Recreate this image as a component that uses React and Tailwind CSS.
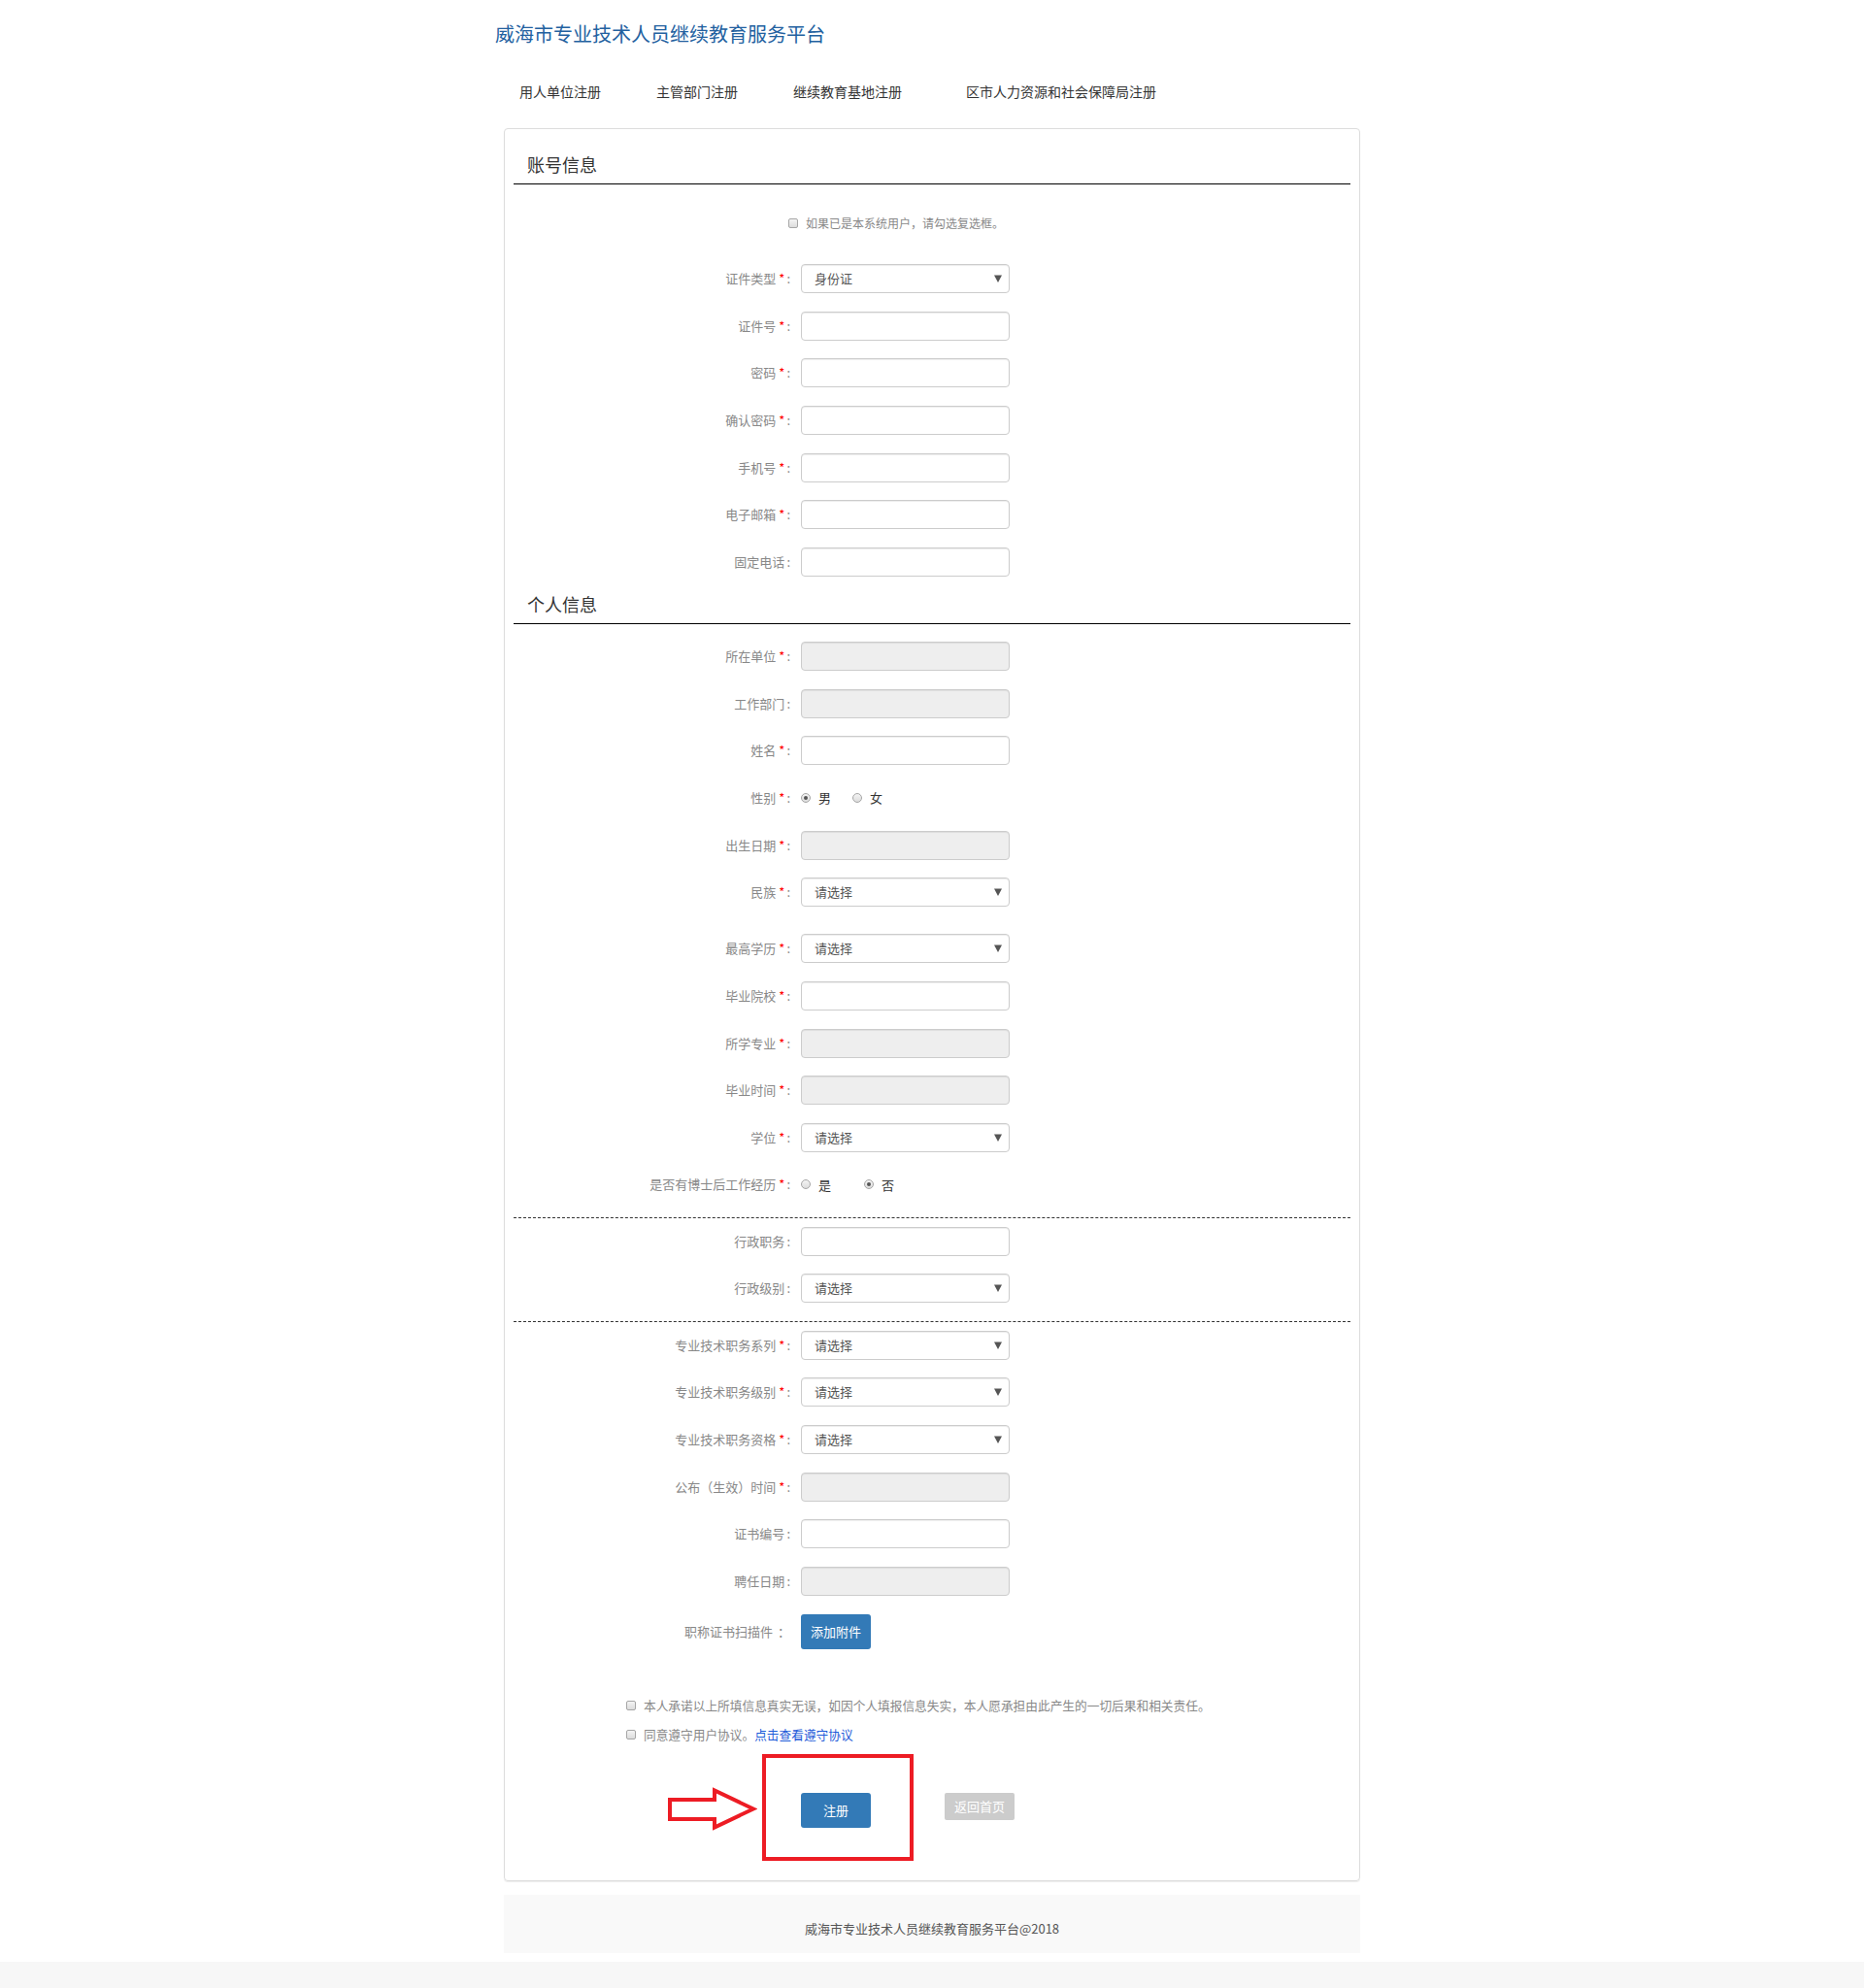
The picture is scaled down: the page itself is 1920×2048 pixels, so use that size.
import React from 'react';

const NAV = [
  { label: '用人单位注册', w: 'w-[141px]' },
  { label: '主管部门注册', w: 'w-[141px]' },
  { label: '继续教育基地注册', w: 'w-[178px]' },
  { label: '区市人力资源和社会保障局注册', w: '' },
];

function Check() {
  return (
    <span className="inline-block w-[10px] h-[10px] rounded-[2px] border border-[#a6a6a6] bg-gradient-to-b from-[#f4f4f4] to-[#dcdcdc] shrink-0" />
  );
}

function Radio({ checked }) {
  return (
    <span className="inline-flex w-[10px] h-[10px] rounded-full border border-[#a6a6a6] bg-gradient-to-b from-[#f4f4f4] to-[#dcdcdc] items-center justify-center shrink-0">
      {checked && <span className="w-[4px] h-[4px] rounded-full bg-[#555]" />}
    </span>
  );
}

function Row({ label, req, colon = ':', className = '', children }) {
  return (
    <div className={`flex items-center ${className}`}>
      <div className="w-[285px] text-right text-[13px] leading-[30px] text-[#888] whitespace-nowrap">
        {label}
        {req && <span className="text-[#f00] ml-[3px]">*</span>}
        <span className="ml-[2px]">{colon}</span>
      </div>
      <div className="ml-[11px] w-[215px]">{children}</div>
    </div>
  );
}

function TextInput({ disabled }) {
  return (
    <input
      type="text"
      disabled={disabled}
      className={`block w-full h-[30px] rounded-[4px] border border-[#ccc] shadow-[inset_0_1px_1px_rgba(0,0,0,0.075)] outline-none ${disabled ? 'bg-[#eee]' : 'bg-white'}`}
    />
  );
}

function Select({ value = '请选择' }) {
  return (
    <div className="flex items-center justify-between h-[30px] rounded-[4px] border border-[#ccc] bg-white shadow-[inset_0_1px_1px_rgba(0,0,0,0.075)] pl-[13px] pr-[7px]">
      <span className="text-[13px] leading-[30px] text-[#555]">{value}</span>
      <svg width="8" height="8" viewBox="0 0 8 8">
        <polygon points="0,0.5 8,0.5 4,8" fill="#555" />
      </svg>
    </div>
  );
}

function SectionHead({ title, className = '' }) {
  return (
    <div className={`pb-[8px] pl-[14px] border-b border-black text-[18px] leading-[24px] text-[#333] ${className}`}>
      {title}
    </div>
  );
}

function Dashed({ className = '' }) {
  return <div className={`border-t border-dashed border-[#333] ${className}`} />;
}

export default function App() {
  return (
    <div className="min-h-screen bg-white font-['Noto_Sans_CJK_SC',sans-serif]">
      <div className="w-[900px] mx-auto">
        {/* header */}
        <div className="pt-[21px] text-[20px] leading-[28px] text-[#23619f]">威海市专业技术人员继续教育服务平台</div>
        <div className="mt-[35px] ml-[25px] flex text-[14px] leading-[20px] text-[#333]">
          {NAV.map(n => (
            <div key={n.label} className={n.w}>{n.label}</div>
          ))}
        </div>

        {/* form panel */}
        <div className="mt-[28px] mx-[9px] border border-[#ddd] rounded-[4px] shadow-[0_1px_1px_rgba(0,0,0,0.08)] px-[9px] pb-[20px]">
          <SectionHead title="账号信息" className="pt-[24px]" />

          <div className="mt-[31px] pl-[283px] flex items-center h-[18px]">
            <Check />
            <span className="ml-[8px] text-[12px] leading-[18px] text-[#888]">如果已是本系统用户，请勾选复选框。</span>
          </div>

          <div className="mt-[33px] flex flex-col gap-[18.67px]">
            <Row label="证件类型" req><Select value="身份证" /></Row>
            <Row label="证件号" req><TextInput /></Row>
            <Row label="密码" req><TextInput /></Row>
            <Row label="确认密码" req><TextInput /></Row>
            <Row label="手机号" req><TextInput /></Row>
            <Row label="电子邮箱" req><TextInput /></Row>
            <Row label="固定电话"><TextInput /></Row>
          </div>

          <SectionHead title="个人信息" className="mt-[16px]" />

          <div className="mt-[18px] flex flex-col gap-[18.67px]">
            <Row label="所在单位" req><TextInput disabled /></Row>
            <Row label="工作部门"><TextInput disabled /></Row>
            <Row label="姓名" req><TextInput /></Row>
            <Row label="性别" req>
              <div className="flex items-center h-[30px] text-[13px] text-[#333]">
                <Radio checked />
                <span className="ml-[8px]">男</span>
                <span className="ml-[22px] flex"><Radio /></span>
                <span className="ml-[8px]">女</span>
              </div>
            </Row>
            <Row label="出生日期" req><TextInput disabled /></Row>
            <Row label="民族" req><Select /></Row>
            <Row label="最高学历" req className="mt-[9.33px]"><Select /></Row>
            <Row label="毕业院校" req><TextInput /></Row>
            <Row label="所学专业" req><TextInput disabled /></Row>
            <Row label="毕业时间" req><TextInput disabled /></Row>
            <Row label="学位" req><Select /></Row>
            <Row label="是否有博士后工作经历" req>
              <div className="flex items-center h-[30px] text-[13px] text-[#333]">
                <Radio />
                <span className="ml-[8px]">是</span>
                <span className="ml-[34px] flex"><Radio checked /></span>
                <span className="ml-[8px]">否</span>
              </div>
            </Row>
          </div>

          <Dashed className="mt-[18.33px]" />

          <div className="mt-[9px] flex flex-col gap-[18.67px]">
            <Row label="行政职务"><TextInput /></Row>
            <Row label="行政级别"><Select /></Row>
          </div>

          <Dashed className="mt-[18.33px]" />

          <div className="mt-[9px] flex flex-col gap-[18.67px]">
            <Row label="专业技术职务系列" req><Select /></Row>
            <Row label="专业技术职务级别" req><Select /></Row>
            <Row label="专业技术职务资格" req><Select /></Row>
            <Row label="公布（生效）时间" req><TextInput disabled /></Row>
            <Row label="证书编号"><TextInput /></Row>
            <Row label="聘任日期"><TextInput disabled /></Row>
            <Row label="职称证书扫描件" colon=" ：" className="h-[36px]">
              <button className="w-[72px] h-[36px] rounded-[3px] bg-[#337ab7] text-white text-[13px]">添加附件</button>
            </Row>
          </div>

          {/* agreements */}
          <div className="mt-[49px] pl-[116px] flex items-center h-[18px]">
            <Check />
            <span className="ml-[8px] text-[12.7px] leading-[18px] text-[#888]">
              本人承诺以上所填信息真实无误，如因个人填报信息失实，本人愿承担由此产生的一切后果和相关责任。
            </span>
          </div>
          <div className="mt-[12px] pl-[116px] flex items-center h-[18px]">
            <Check />
            <span className="ml-[8px] text-[12.7px] leading-[18px] text-[#888]">
              同意遵守用户协议。<a className="text-[#1d5ad8]">点击查看遵守协议</a>
            </span>
          </div>

          {/* submit row */}
          <div className="mt-[11px] ml-[159px] flex items-start">
            <svg width="92" height="45" viewBox="0 0 92 45" className="mt-[34px]">
              <polygon
                points="2,13 48,13 48,3.5 88,22.5 48,41.5 48,33 2,33"
                fill="white"
                stroke="#ed1c24"
                strokeWidth="4"
                strokeLinejoin="miter"
              />
            </svg>
            <div className="ml-[5px] w-[156px] h-[110px] border-4 border-[#ed1c24] pl-[36px] pt-[36px]">
              <button className="w-[72px] h-[36px] rounded-[3px] bg-[#337ab7] text-white text-[13px]">注册</button>
            </div>
            <button className="ml-[32px] mt-[40px] w-[72px] h-[28px] rounded-[2px] bg-[#ccc] text-white text-[13px]">返回首页</button>
          </div>
        </div>

        {/* footer */}
        <div className="mt-[14px] mx-[9px] h-[60px] bg-[#f9f9f9] pt-[26px] text-center text-[13px] leading-[18px] text-[#555]">
          威海市专业技术人员继续教育服务平台@2018
        </div>
      </div>
      <div className="mt-[9px] h-[27px] bg-[#f7f7f7]" />
    </div>
  );
}
